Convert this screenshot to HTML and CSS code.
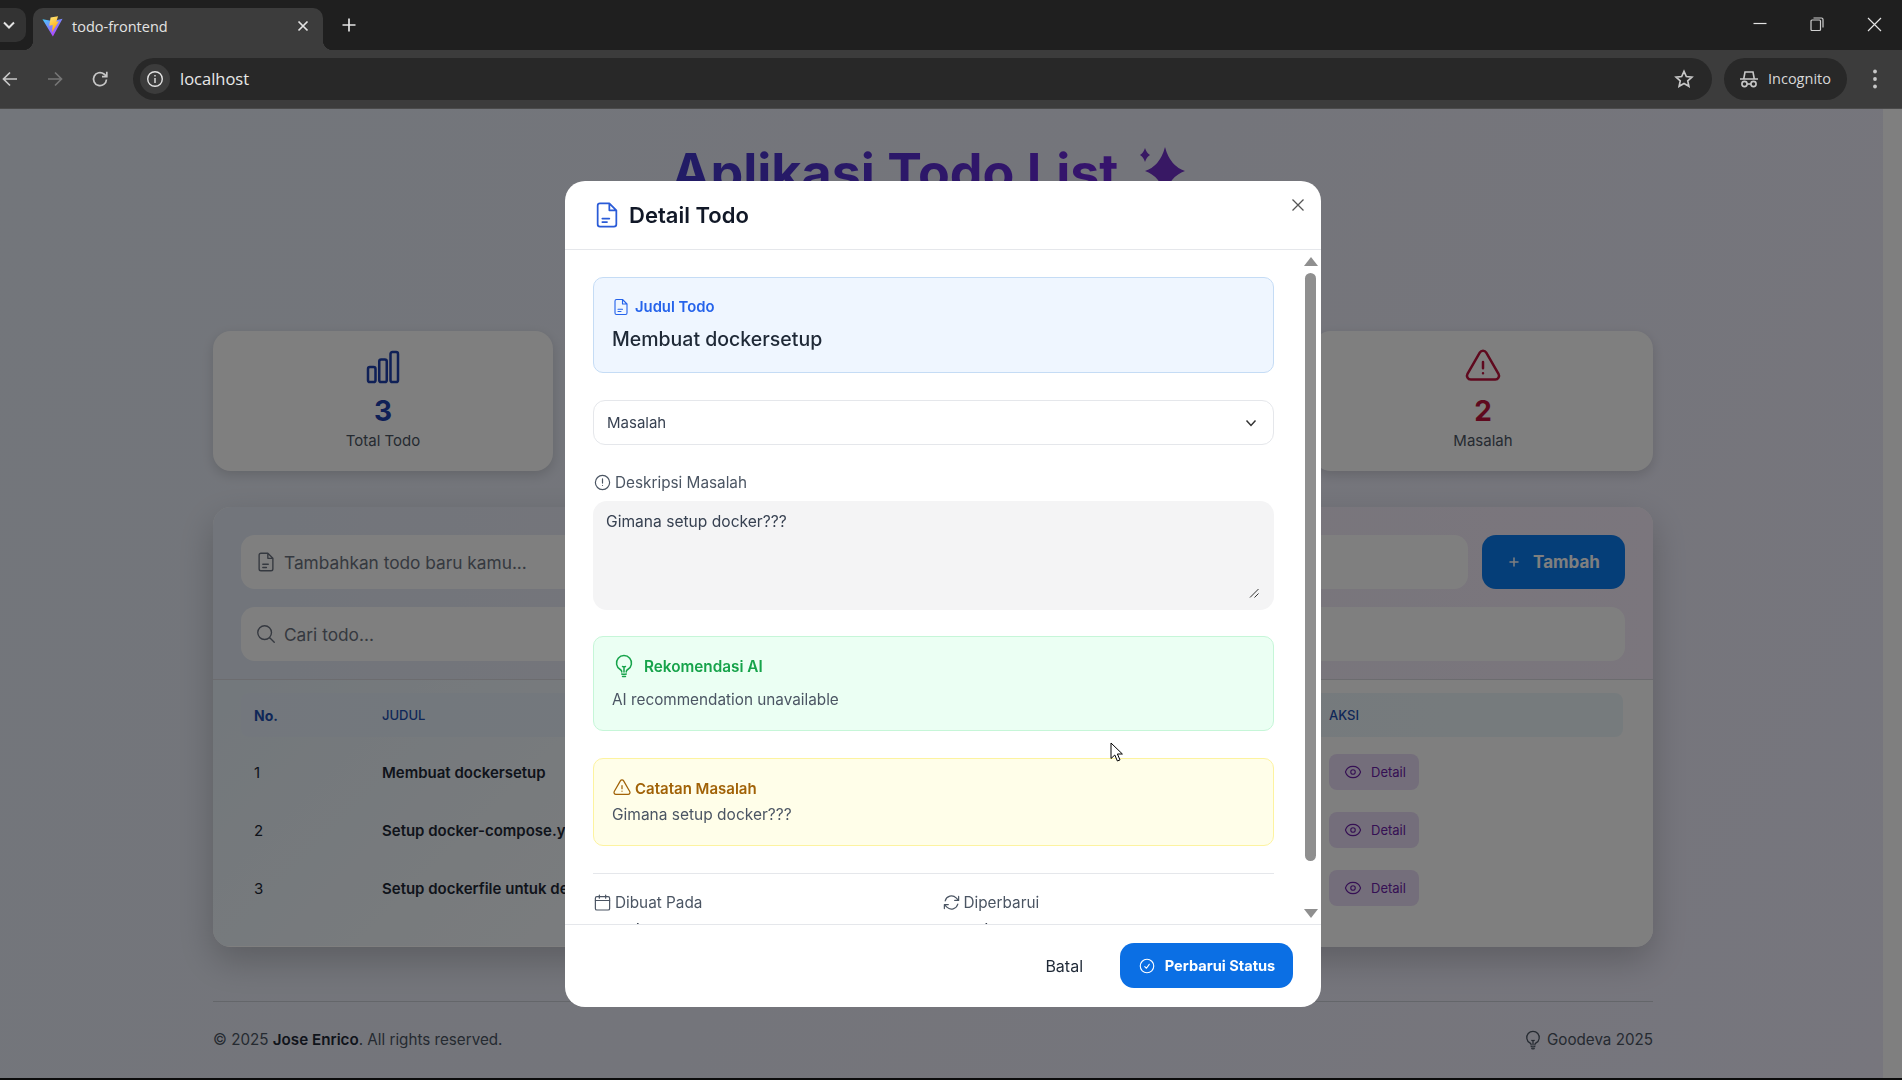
FILE: index.html
```html
<!DOCTYPE HTML>
<html>
<head>
<meta http-equiv="Content-Type" content="text/html; charset=utf-8">
<title>todo-frontend</title>
<link rel="stylesheet" href="styles.css">
</head>

<body>
<!-- browser window -->
<header class="tabstrip">
	<div class="tab-list-btn">
		<svg width="14" height="14" viewBox="0 0 14 14" fill="none" stroke="#e3e3e3" stroke-width="2"><path d="M2 4.5l5 5 5-5"/></svg>
	</div>
	<div class="tab">
		<svg class="favicon" width="21" height="21" viewBox="0 0 22 22">
			<defs>
				<linearGradient id="viteA" x1="0" y1="0" x2="0.7" y2="1"><stop offset="0" stop-color="#41d1ff"/><stop offset="1" stop-color="#bd34fe"/></linearGradient>
				<linearGradient id="viteB" x1="0" y1="0" x2="0.4" y2="1"><stop offset="0" stop-color="#ffea83"/><stop offset="1" stop-color="#ffa800"/></linearGradient>
			</defs>
			<path d="M0.5 3.5L11 5.2 21.5 3 11.4 21.5z" fill="url(#viteA)"/>
			<path d="M9 1.5L16.8 0.2 15 6 17.8 5.4 10.5 17 11.2 9.5 7.6 10.2z" fill="url(#viteB)"/>
		</svg>
		<span class="tab-title">todo-frontend</span>
		<svg class="tab-close" width="12" height="12" viewBox="0 0 12 12" stroke="#e3e3e3" stroke-width="1.7"><path d="M1.5 1.5l9 9M10.5 1.5l-9 9"/></svg>
	</div>
	<svg class="new-tab" width="16" height="16" viewBox="0 0 16 16" stroke="#e3e3e3" stroke-width="1.7"><path d="M8 1.5v13M1.5 8h13"/></svg>
	<div class="win-controls">
		<svg width="14" height="14" viewBox="0 0 14 14" stroke="#e3e3e3" stroke-width="1.2"><path d="M0.5 6.5h13"/></svg>
		<svg width="14" height="16" viewBox="0 0 14 16" fill="none" stroke="#d0d0d0" stroke-width="1.2"><rect x="1" y="4" width="9.5" height="10.5" rx="1"/><path d="M3.5 2h8a1.5 1.5 0 011.5 1.5v8"/></svg>
		<svg width="15" height="15" viewBox="0 0 15 15" stroke="#e3e3e3" stroke-width="1.2"><path d="M1 1l13 13M14 1L1 14"/></svg>
	</div>
</header>

<nav class="toolbar">
	<svg class="nav-icon nav-back" width="18" height="18" viewBox="0 0 18 18" fill="none" stroke="#c7c7c7" stroke-width="1.7"><path d="M16 9H2.5M9 2.5L2.5 9 9 15.5"/></svg>
	<svg class="nav-icon nav-forward" width="18" height="18" viewBox="0 0 18 18" fill="none" stroke="#757575" stroke-width="1.7"><path d="M2 9h13.5M9 2.5L15.5 9 9 15.5"/></svg>
	<svg class="nav-icon nav-reload" width="18" height="18" viewBox="0 0 18 18" fill="none" stroke="#c7c7c7" stroke-width="1.7"><path d="M15.5 9.5A6.5 6.5 0 1113 4l2.5 2.2"/><path d="M15.8 1.8v4.8H11"/></svg>
	<div class="urlbar">
		<span class="site-chip">
			<svg width="18" height="18" viewBox="0 0 18 18" fill="none" stroke="#e3e3e3" stroke-width="1.4"><circle cx="9" cy="9" r="7.3"/><path d="M9 8v5M9 5v1.6"/></svg>
		</span>
		<span class="url-text">localhost</span>
		<svg class="star" width="20" height="20" viewBox="0 0 24 24" fill="none" stroke="#c7c7c7" stroke-width="2"><path d="M12 2.8l2.8 6.2 6.7.7-5 4.5 1.4 6.6-5.9-3.4-5.9 3.4 1.4-6.6-5-4.5 6.7-.7z"/></svg>
	</div>
	<div class="incognito">
		<svg width="20" height="20" viewBox="0 0 20 20" fill="none" stroke="#c7c7c7" stroke-width="1.6"><path d="M4.8 9.5L6 3h8l1.2 6.5M1 10h18"/><circle cx="5.5" cy="15" r="2.6"/><circle cx="14.5" cy="15" r="2.6"/><path d="M8 15h4"/></svg>
		<span>Incognito</span>
	</div>
	<svg class="kebab" width="6" height="20" viewBox="0 0 6 20" fill="#c7c7c7"><circle cx="3" cy="2.5" r="1.9"/><circle cx="3" cy="10" r="1.9"/><circle cx="3" cy="17.5" r="1.9"/></svg>
</nav>

<div class="viewport">
	<main class="page">
		<div class="container">
			<div class="app-title">
				<h1>Aplikasi Todo List</h1>
				<svg class="sparkle" width="64" height="64" viewBox="0 0 64 64"><path d="M41 8Q46 27 61 32 46 37 41 56 36 37 21 32 36 27 41 8zM21 9Q22.500 14 26 16 22.500 18 21 23 19.500 18 16 16 19.500 14 21 9zM17 42Q18.500 47 22 49 18.500 51 17 56 15.500 51 12 49 15.500 47 17 42z"/></svg>
			</div>

			<section class="stats">
				<div class="stat-card stat-blue">
					<svg class="ico" width="40" height="40" viewBox="0 0 24 24"><path d="M3 13.125C3 12.504 3.504 12 4.125 12h2.25c.621 0 1.125.504 1.125 1.125v6.75C7.500 20.496 6.996 21 6.375 21h-2.250A1.125 1.125 0 013 19.875v-6.750zM9.750 8.625c0-.621.504-1.125 1.125-1.125h2.250c.621 0 1.125.504 1.125 1.125v11.250c0 .621-.504 1.125-1.125 1.125h-2.250a1.125 1.125 0 01-1.125-1.125V8.625zM16.500 4.125c0-.621.504-1.125 1.125-1.125h2.250C20.496 3 21 3.504 21 4.125v15.750c0 .621-.504 1.125-1.125 1.125h-2.250a1.125 1.125 0 01-1.125-1.125V4.125z"/></svg>
					<div class="stat-num">3</div>
					<div class="stat-label">Total Todo</div>
				</div>
				<div class="stat-card"></div>
				<div class="stat-card"></div>
				<div class="stat-card stat-red">
					<svg class="ico" width="40" height="40" viewBox="0 0 24 24"><path d="M12 9v3.750m-9.303 3.376c-.866 1.500.217 3.374 1.948 3.374h14.710c1.730 0 2.813-1.874 1.948-3.374L13.949 3.378c-.866-1.500-3.032-1.500-3.898 0L2.697 16.126zM12 15.750h.007v.008H12v-.008z"/></svg>
					<div class="stat-num">2</div>
					<div class="stat-label">Masalah</div>
				</div>
			</section>

			<section class="panel">
				<div class="panel-form">
					<div class="form-row">
						<div class="field">
							<svg class="ico" width="22" height="22" viewBox="0 0 24 24"><path d="M14 2.500H6.500a2 2 0 00-2 2v15a2 2 0 002 2h11a2 2 0 002-2V8zM14 2.500V8h5.500M8.500 14.500h6M8.500 18h4"/></svg>
							<span>Tambahkan todo baru kamu...</span>
						</div>
						<button class="add-btn">
							<svg class="ico" width="14" height="14" viewBox="0 0 14 14"><path d="M7 3v8M3 7h8"/></svg>
							Tambah
						</button>
					</div>
					<div class="field">
						<svg class="ico" width="22" height="22" viewBox="0 0 24 24"><path d="M21 21l-5.197-5.197m0 0A7.500 7.500 0 105.196 5.196a7.500 7.500 0 0010.607 10.607z"/></svg>
						<span>Cari todo...</span>
					</div>
				</div>
				<div class="panel-table">
					<div class="t-row t-head">
						<div class="t-no">No.</div>
						<div class="t-title">JUDUL</div>
						<div class="t-action">AKSI</div>
					</div>
					<div class="t-row">
						<div class="t-no">1</div>
						<div class="t-title">Membuat dockersetup</div>
						<div class="t-action"><button class="detail-btn"><svg class="ico" width="18" height="18" viewBox="0 0 24 24"><path d="M2.036 12.322a1.012 1.012 0 010-.639C3.423 7.510 7.360 4.500 12 4.500c4.638 0 8.573 3.007 9.963 7.178.07.207.07.431 0 .639C20.577 16.490 16.640 19.500 12 19.500c-4.638 0-8.573-3.007-9.963-7.178zM15 12a3 3 0 11-6 0 3 3 0 016 0z"/></svg>Detail</button></div>
					</div>
					<div class="t-row">
						<div class="t-no">2</div>
						<div class="t-title">Setup docker-compose.yml</div>
						<div class="t-action"><button class="detail-btn"><svg class="ico" width="18" height="18" viewBox="0 0 24 24"><path d="M2.036 12.322a1.012 1.012 0 010-.639C3.423 7.510 7.360 4.500 12 4.500c4.638 0 8.573 3.007 9.963 7.178.07.207.07.431 0 .639C20.577 16.490 16.640 19.500 12 19.500c-4.638 0-8.573-3.007-9.963-7.178zM15 12a3 3 0 11-6 0 3 3 0 016 0z"/></svg>Detail</button></div>
					</div>
					<div class="t-row">
						<div class="t-no">3</div>
						<div class="t-title">Setup dockerfile untuk development</div>
						<div class="t-action"><button class="detail-btn"><svg class="ico" width="18" height="18" viewBox="0 0 24 24"><path d="M2.036 12.322a1.012 1.012 0 010-.639C3.423 7.510 7.360 4.500 12 4.500c4.638 0 8.573 3.007 9.963 7.178.07.207.07.431 0 .639C20.577 16.490 16.640 19.500 12 19.500c-4.638 0-8.573-3.007-9.963-7.178zM15 12a3 3 0 11-6 0 3 3 0 016 0z"/></svg>Detail</button></div>
					</div>
				</div>
			</section>

			<footer class="page-footer">
				<div>&copy; 2025 <strong>Jose Enrico</strong>. All rights reserved.</div>
				<div class="credit">
					<svg class="ico" width="20" height="20" viewBox="0 0 24 24"><path d="M12 18v-5.250m0 0a6.010 6.010 0 001.500-.189m-1.500.189a6.010 6.010 0 01-1.500-.189m3.750 7.478a12.060 12.060 0 01-4.500 0m3.750 2.383a14.406 14.406 0 01-3 0M14.250 18v-.192c0-.983.658-1.823 1.508-2.316a7.500 7.500 0 10-7.517 0c.85.493 1.509 1.333 1.509 2.316V18"/></svg>
					Goodeva 2025
				</div>
			</footer>
		</div>
	</main>
	<div class="page-scrollbar"></div>

	<!-- modal -->
	<div class="overlay">
		<div class="modal">
			<div class="modal-head">
				<svg class="ico" width="28" height="28" viewBox="0 0 24 24"><path d="M14 2H6a2 2 0 00-2 2v16a2 2 0 002 2h12a2 2 0 002-2V8zM14 2v6h6M8 15h6M8 18h4"/></svg>
				<h2>Detail Todo</h2>
				<svg class="modal-close" width="14" height="14" viewBox="0 0 14 14" stroke="#555" stroke-width="1.3"><path d="M1.500 1.500l11 11M12.500 1.500l-11 11"/></svg>
			</div>
			<div class="modal-body">
				<div class="modal-scroll">
					<div class="box box-blue">
						<div class="box-label">
							<svg class="ico" width="18" height="18" viewBox="0 0 24 24"><path d="M14 2H6a2 2 0 00-2 2v16a2 2 0 002 2h12a2 2 0 002-2V8zM14 2v6h6M8 15h6M8 18h4"/></svg>
							Judul Todo
						</div>
						<div class="box-title">Membuat dockersetup</div>
					</div>

					<div class="select">
						<span>Masalah</span>
						<svg width="12" height="12" viewBox="0 0 12 12" fill="none" stroke="#333" stroke-width="1.500"><path d="M1.500 3.500L6 8.500l4.500-5"/></svg>
					</div>

					<label class="field-label">
						<svg class="ico" width="19" height="19" viewBox="0 0 24 24"><path d="M12 7.500v5.250m9-.75a9 9 0 11-18 0 9 9 0 0118 0zm-9 3.750h.008v.008H12v-.008z"/></svg>
						Deskripsi Masalah
					</label>
					<div class="desc-wrap">
						<textarea class="desc" readonly>Gimana setup docker???</textarea>
						<svg class="resize-grip" width="10" height="10" viewBox="0 0 10 10" stroke="#333" stroke-width="1"><path d="M1 9.500L9.500 1M5.500 9.500L9.500 5.500"/></svg>
					</div>

					<div class="box box-green">
						<div class="box-label">
							<svg class="ico" width="24" height="24" viewBox="0 0 24 24"><path d="M12 18v-5.250m0 0a6.010 6.010 0 001.500-.189m-1.500.189a6.010 6.010 0 01-1.500-.189m3.750 7.478a12.060 12.060 0 01-4.500 0m3.750 2.383a14.406 14.406 0 01-3 0M14.250 18v-.192c0-.983.658-1.823 1.508-2.316a7.500 7.500 0 10-7.517 0c.85.493 1.509 1.333 1.509 2.316V18"/></svg>
							Rekomendasi AI
						</div>
						<div class="box-text">AI recommendation unavailable</div>
					</div>

					<div class="box box-yellow">
						<div class="box-label">
							<svg class="ico" width="20" height="20" viewBox="0 0 24 24"><path d="M12 9v3.750m-9.303 3.376c-.866 1.500.217 3.374 1.948 3.374h14.710c1.730 0 2.813-1.874 1.948-3.374L13.949 3.378c-.866-1.500-3.032-1.500-3.898 0L2.697 16.126zM12 15.750h.007v.008H12v-.008z"/></svg>
							Catatan Masalah
						</div>
						<div class="box-text">Gimana setup docker???</div>
					</div>

					<div class="dates">
						<div>
							<div class="field-label">
								<svg class="ico" width="19" height="19" viewBox="0 0 24 24"><rect x="3" y="4.500" width="18" height="17" rx="2"/><path d="M3 9.500h18M8 2.500v4M16 2.500v4"/></svg>
								Dibuat Pada
							</div>
							<div class="date-value">Juli 2025</div>
						</div>
						<div>
							<div class="field-label">
								<svg class="ico" width="19" height="19" viewBox="0 0 24 24"><path d="M16.023 9.348h4.992v-.001M2.985 19.644v-4.992m0 0h4.992m-4.993 0l3.181 3.183a8.250 8.250 0 0013.803-3.700M4.031 9.865a8.250 8.250 0 0113.803-3.700l3.181 3.182m0-4.991v4.990"/></svg>
								Diperbarui
							</div>
							<div class="date-value">Juli 2025</div>
						</div>
					</div>
				</div>
				<div class="modal-scrollbar">
					<span class="arrow-up"></span>
					<span class="thumb"></span>
					<span class="arrow-down"></span>
				</div>
			</div>
			<div class="modal-foot">
				<button class="btn-cancel">Batal</button>
				<button class="btn-save">
					<svg class="ico" width="18" height="18" viewBox="0 0 24 24"><path d="M9 12.750L11.250 15 15 9.750M21 12a9 9 0 11-18 0 9 9 0 0118 0z"/></svg>
					Perbarui Status
				</button>
			</div>
		</div>
	</div>

	<svg class="cursor" width="14" height="20" viewBox="0 0 14 20"><path d="M1 1v15.500l3.800-3.500 2.600 6 2.600-1.100-2.600-5.900h5z" fill="#fff" stroke="#000" stroke-width="1"/></svg>
</div>
<div class="screen-edge"></div>
</body>
</html>
```

FILE: styles.css
```css
*{
	margin: 0;
	padding: 0;
	box-sizing: border-box;
}

html, body{
	height: 100%;
	overflow: hidden;
}

body{
	display: flex;
	flex-direction: column;
	font-family: "Inter", "Liberation Sans", sans-serif;
	font-size: 16px;
	color: #1f2937;
	background: #000;
}

button{
	font-family: inherit;
	border: none;
	cursor: pointer;
}

.ico{
	fill: none;
	stroke: currentColor;
	stroke-width: 1.5;
	stroke-linecap: round;
	stroke-linejoin: round;
	flex: none;
}

/* browser window */
.tabstrip{
	height: 50px;
	flex: none;
	display: flex;
	align-items: flex-start;
	background: #1f1f1f;
}
.tab-list-btn{
	width: 26px;
	height: 34px;
	margin-top: 8px;
	display: flex;
	align-items: center;
	justify-content: center;
	padding-right: 8px;
	background: #333;
	border-radius: 0 10px 10px 0;
}
.tab{
	position: relative;
	width: 290px;
	height: 42px;
	margin: 8px 0 0 7px;
	padding: 0 14px 6px 9px;
	display: flex;
	align-items: center;
	background: #3c3c3c;
	border-radius: 10px 10px 0 0;
	color: #e3e3e3;
	font-family: "Open Sans", "Liberation Sans", sans-serif;
	font-size: 14.5px;
}
.tab::before, .tab::after{
	content: "";
	position: absolute;
	bottom: 0;
	width: 10px;
	height: 10px;
}
.tab::before{
	left: -10px;
	background: radial-gradient(circle at 0 0, transparent 10px, #3c3c3c 10.5px);
}
.tab::after{
	right: -10px;
	background: radial-gradient(circle at 100% 0, transparent 10px, #3c3c3c 10.5px);
}
.favicon{
	margin-right: 9px;
}
.tab-title{
	flex: 1;
}
.new-tab{
	margin: 17px 0 0 18px;
}
.win-controls{
	margin: 16px 20px 0 auto;
	display: flex;
	align-items: center;
	gap: 43px;
}

.toolbar{
	height: 59px;
	flex: none;
	display: flex;
	align-items: center;
	background: #3c3c3c;
	border-bottom: 1px solid #4a4a4a;
	padding-bottom: 1px;
}
.nav-icon{
	margin-left: 27px;
}
.nav-back{
	margin-left: 1px;
}
.urlbar{
	width: 1579px;
	height: 42px;
	margin-left: 24px;
	display: flex;
	align-items: center;
	background: #282828;
	border-radius: 21px;
	padding: 0 18px 0 7px;
}
.site-chip{
	width: 30px;
	height: 30px;
	display: flex;
	align-items: center;
	justify-content: center;
	background: #3c3c3c;
	border-radius: 50%;
}
.url-text{
	flex: 1;
	margin-left: 10px;
	color: #e8e8e8;
	font-family: "Open Sans", "Liberation Sans", sans-serif;
	font-size: 16.500px;
}
.incognito{
	width: 123px;
	height: 42px;
	margin-left: 12px;
	display: flex;
	align-items: center;
	gap: 9px;
	padding-left: 15px;
	background: #282828;
	border-radius: 21px;
	color: #d8d8d8;
	font-family: "Open Sans", "Liberation Sans", sans-serif;
	font-size: 14.5px;
}
.kebab{
	margin-left: 25px;
}

/* app page underneath */
.viewport{
	flex: 1;
	display: flex;
	position: relative;
	overflow: hidden;
}
.page{
	flex: 1;
	padding-left: 213px;
	background: linear-gradient(120deg, #e6ecf6 0%, #e9ebf6 50%, #eeecfb 100%);
}
.page-scrollbar{
	width: 19px;
	background: #fff;
}
.container{
	width: 1440px;
}
.app-title{
	height: 222px;
	padding: 30px 6px 0 0;
	display: flex;
	justify-content: center;
	align-items: flex-start;
}
.app-title h1{
	font-size: 52px;
	line-height: 68px;
	font-weight: 700;
	background: linear-gradient(90deg, #4338ca, #6d28d9);
	-webkit-background-clip: text;
	background-clip: text;
	color: transparent;
}
.sparkle{
	margin-left: 6px;
	fill: #7030c8;
}

.stats{
	display: grid;
	grid-template-columns: repeat(4, 1fr);
	gap: 26.67px;
}
.stat-card{
	height: 140px;
	padding-top: 16px;
	display: flex;
	flex-direction: column;
	align-items: center;
	background: #fff;
	border-radius: 18px;
	box-shadow: 0 4px 12px rgba(0,0,0,.14);
}
.stat-num{
	margin-top: 6px;
	font-size: 28px;
	line-height: 36px;
	font-weight: 700;
}
.stat-label{
	line-height: 24px;
	font-size: 15px;
	color: #4b5563;
}
.stat-blue{
	color: #1e40af;
}
.stat-red{
	color: #be123c;
}

.panel{
	height: 440px;
	margin-top: 36px;
	background: #fff;
	border-radius: 18px;
	box-shadow: 0 14px 34px rgba(0,0,0,.2), inset 0 0 0 1px rgba(255,255,255,.4);
	overflow: hidden;
}
.panel-form{
	height: 173px;
	padding: 28px 28px 0;
	display: flex;
	flex-direction: column;
	gap: 18px;
	background: linear-gradient(90deg, #e4ebf6, #f6ecfa);
	border-bottom: 1px solid #d8d8de;
}
.form-row{
	display: flex;
	gap: 14px;
}
.field{
	flex: 1 0 54px;
	height: 54px;
	padding: 0 14px;
	display: flex;
	align-items: center;
	gap: 7px;
	background: #fff;
	border-radius: 14px;
	color: #6b7280;
	font-size: 17.300px;
}
.panel-form > .field{
	flex: none;
}
.add-btn{
	width: 143px;
	height: 54px;
	display: flex;
	align-items: center;
	justify-content: center;
	gap: 12px;
	border-radius: 14px;
	background: #0a7cf0;
	color: #fff;
	font-size: 17px;
	font-weight: 700;
}
.panel-table{
	padding: 13px 30px 0 28px;
	background: linear-gradient(135deg, #e6f0f8 0%, #fff 60%);
	height: 266px;
}
.t-row{
	height: 58px;
	display: flex;
	align-items: center;
	padding-left: 13px;
	font-size: 15px;
	font-weight: 600;
}
.t-head{
	height: 44px;
	margin-bottom: 6px;
	border-radius: 8px;
	background: linear-gradient(90deg, #e6effa, #edf7fa);
	font-size: 13px;
	color: #1e4fb0;
}
.t-no{
	width: 128px;
	font-weight: 400;
}
.t-head .t-no{
	font-size: 14px;
	font-weight: 700;
}
.t-title{
	width: 947px;
	white-space: nowrap;
}
.t-head .t-title, .t-head .t-action{
	font-weight: 500;
}
.detail-btn{
	width: 90px;
	height: 36px;
	display: flex;
	align-items: center;
	gap: 9px;
	padding-left: 15px;
	border-radius: 8px;
	background: #e9dcf6;
	color: #6b21a8;
	font-size: 13px;
}

.page-footer{
	height: 54px;
	margin-top: 54px;
	padding-top: 23px;
	display: flex;
	justify-content: space-between;
	border-top: 1px solid #c9ccd4;
	color: #4b5563;
	font-size: 15.200px;
	line-height: 30px;
}
.page-footer strong{
	font-weight: 600;
	color: #1f2937;
}
.credit{
	display: flex;
	align-items: center;
	gap: 4px;
}

/* modal */
.overlay{
	position: absolute;
	inset: 0;
	padding: 72px 16px 71px 0;
	display: flex;
	justify-content: center;
	background: rgba(0,0,0,.5);
	backdrop-filter: blur(.7px);
}
.modal{
	width: 756px;
	height: 826px;
	display: flex;
	flex-direction: column;
	background: #fff;
	border-radius: 20px;
	position: relative;
	overflow: hidden;
}
.modal-head{
	height: 69px;
	flex: none;
	display: flex;
	align-items: center;
	gap: 8px;
	padding: 0 0 0 28px;
	border-bottom: 1px solid #e5e7eb;
	color: #2a5bd7;
}
.modal-head h2{
	font-size: 22px;
	font-weight: 600;
	color: #111827;
}
.modal-close{
	position: absolute;
	top: 17px;
	right: 16px;
}
.modal-body{
	flex: 1;
	min-height: 0;
	display: flex;
}
.modal-scroll{
	width: 735px;
	padding: 27px 26px 0 28px;
	overflow: hidden;
}
.modal-scrollbar{
	flex: 1;
	display: flex;
	flex-direction: column;
	align-items: center;
	padding: 7px 0 6px;
}
.arrow-up, .arrow-down{
	width: 0;
	height: 0;
	border-left: 7px solid transparent;
	border-right: 7px solid transparent;
}
.arrow-up{
	border-bottom: 9px solid #8f8f8f;
}
.arrow-down{
	margin-top: auto;
	border-top: 9px solid #8f8f8f;
}
.thumb{
	width: 11px;
	height: 588px;
	margin-top: 7px;
	background: #8f8f8f;
	border-radius: 6px;
}

.box{
	border: 1px solid;
	border-radius: 10px;
}
.box-label{
	display: flex;
	align-items: center;
	font-weight: 600;
}
.box-blue{
	height: 96px;
	padding: 19px 18px 0;
	background: #eff6ff;
	border-color: #c5dcf5;
}
.box-blue .box-label{
	gap: 5px;
	height: 20px;
	font-size: 14.800px;
	color: #2563eb;
}
.box-title{
	margin-top: 8px;
	font-size: 19.500px;
	line-height: 28px;
	font-weight: 500;
	color: #1f2937;
}
.select{
	height: 45px;
	margin-top: 27px;
	padding: 0 16px 0 13px;
	display: flex;
	align-items: center;
	justify-content: space-between;
	border: 1px solid #e5e7eb;
	border-radius: 12px;
	font-size: 15px;
	color: #374151;
}
.field-label{
	display: flex;
	align-items: center;
	gap: 3px;
	height: 20px;
	font-size: 15.300px;
	color: #4b5563;
}
.modal-scroll > .field-label{
	margin-top: 27px;
}
.desc-wrap{
	position: relative;
	margin-top: 9px;
}
.desc{
	display: block;
	width: 100%;
	height: 109px;
	padding: 10px 13px;
	border: none;
	outline: none;
	resize: none;
	border-radius: 14px;
	background: #f4f4f5;
	font-family: inherit;
	font-size: 15.600px;
	line-height: 22px;
	color: #374151;
}
.resize-grip{
	position: absolute;
	right: 15px;
	bottom: 12px;
}
.box-green{
	height: 95px;
	margin-top: 26px;
	padding: 17px 18px 0;
	background: #ebfff3;
	border-color: #c6f6d8;
}
.box-green .box-label{
	gap: 8px;
	height: 24px;
	font-size: 15.300px;
	color: #16a34a;
}
.box-green .box-text{
	margin-top: 10px;
	font-size: 15.300px;
}
.box-text{
	line-height: 24px;
	font-size: 15.500px;
	color: #4b5563;
}
.box-yellow{
	height: 88px;
	margin-top: 27px;
	padding: 18px 18px 0;
	background: #fffee9;
	border-color: #fdf3a0;
}
.box-yellow .box-label{
	gap: 3px;
	height: 22px;
	font-size: 15px;
	color: #a16207;
}
.box-yellow .box-text{
	margin-top: 4px;
}
.dates{
	display: grid;
	grid-template-columns: 1fr 1fr;
	gap: 16px;
	margin-top: 27px;
	padding-top: 18px;
	border-top: 1px solid #e5e7eb;
}
.date-value{
	margin-top: 8px;
	padding-left: 22px;
	font-size: 15px;
}
.modal-foot{
	height: 83px;
	flex: none;
	display: flex;
	justify-content: flex-end;
	align-items: flex-start;
	gap: 37px;
	padding: 18px 28px 0 0;
	border-top: 1px solid #e5e7eb;
}
.btn-cancel{
	height: 45px;
	background: none;
	font-size: 16px;
	color: #1f2937;
}
.btn-save{
	width: 173px;
	height: 45px;
	display: flex;
	align-items: center;
	justify-content: center;
	gap: 9px;
	border-radius: 14px;
	background: #0b6fe4;
	color: #fff;
	font-size: 14.600px;
	font-weight: 700;
}
.cursor{
	position: absolute;
	left: 1110px;
	top: 633px;
}
.screen-edge{
	height: 2px;
	flex: none;
	background: #0c0c0c;
}
```
